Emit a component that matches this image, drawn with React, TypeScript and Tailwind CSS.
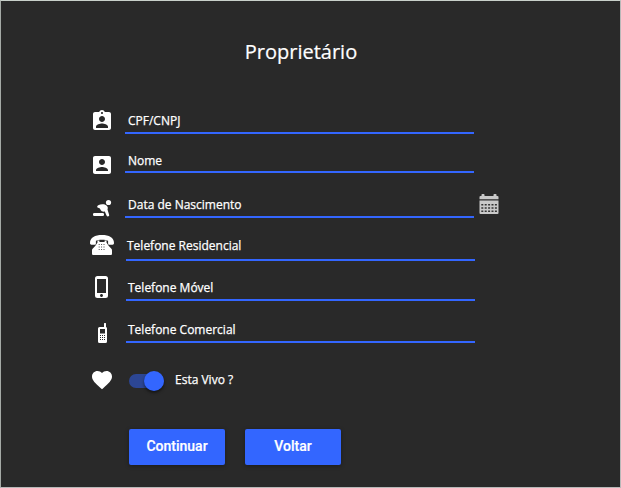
import type { ReactNode } from "react";

function Glyph({ d, className = "" }: { d: string; className?: string }) {
  return (
    <svg viewBox="0 0 24 24" className={`h-6 w-6 shrink-0 fill-white ${className}`}>
      <path d={d} />
    </svg>
  );
}

function Crawling() {
  return (
    <svg viewBox="0 0 24 24" className="mt-[23px] h-6 w-6 shrink-0 fill-white">
      <circle cx="18.5" cy="6.5" r="2.6" />
      <path d="M7.2 10.6C7.2 9.500 9.600 8.600 12.200 8.300C14.200 8.100 15.800 8.800 17 10C18.100 11.200 17.900 12.400 17.500 13.400L19.200 19C19.500 20.500 17.200 21 16.500 19.500L14.800 15.600C13 16 11.200 15.400 10.400 13.500C9.900 12.400 9.300 11.800 8 11.700C7.400 11.600 7.200 11.300 7.200 10.600Z" />
      <rect x="3" y="17" width="11" height="3" rx="1.300" />
    </svg>
  );
}

function DeskPhone() {
  return (
    <svg viewBox="0 0 24 20" className="mt-[17px] h-5 w-6 shrink-0">
      <path
        fill="#fff"
        d="M0 8C0 2.500 5 0 12 0S24 2.500 24 8C24 9.300 23.400 9.700 22.600 9.700H19.300C18.500 9.700 18.100 9.200 18.100 8.400V5.800C16 4.300 8 4.300 5.900 5.800V8.400C5.900 9.200 5.500 9.700 4.700 9.700H1.400C.6 9.700 0 9.300 0 8Z"
      />
      <path
        fill="#fff"
        d="M7.500 5.500H9.400V7H14.600V5.500H16.500V7.500L18.600 10.700L21.400 13.800C22 14.500 22 15.200 22 16.200V18.500C22 19.500 21.500 20 20.500 20H3.500C2.500 20 2 19.500 2 18.500V16.200C2 15.200 2 14.500 2.600 13.800L5.400 10.700L7.500 7.500Z"
      />
      <path stroke="#4a4a4a" strokeWidth="1" strokeDasharray="1 1.400" d="M8.700 9.500H15.500M8.700 12H15.500M8.700 14.500H15.500" />
    </svg>
  );
}

function CellPhone() {
  return (
    <svg viewBox="0 0 24 22" className="mt-[21px] h-[22px] w-6 shrink-0">
      <path fill="#fff" d="M14 1.500Q14 1 14.500 1H15.500Q16 1 16 1.500V5Q17 5.200 17 6.500V19.500Q17 21 15.500 21H9.500Q8 21 8 19.500V6.500Q8 5 9.500 5H14Z" />
      <rect x="10" y="7" width="5" height="4.500" fill="#292929" />
      <path stroke="#292929" strokeWidth="1" strokeDasharray="1 1" d="M10 13.500H15M10 15.500H15M10 17.500H15" />
    </svg>
  );
}

function Calendar() {
  return (
    <svg viewBox="0 0 20 20" className="mb-1 ml-[5px] h-5 w-5 shrink-0">
      <path fill="#c9c9c9" d="M1.500 2H2.500V.8Q2.500 0 3.300 0H4.700Q5.500 0 5.500 .8V2H14.500V.8Q14.500 0 15.300 0H16.700Q17.500 0 17.500 .8V2H18.500Q19.500 2 19.500 3V5.200H.5V3Q.5 2 1.500 2Z" />
      <path fill="#c9c9c9" d="M.5 6.600H19.500V19Q19.500 20 18.500 20H1.500Q.5 20 .5 19Z" />
      <path stroke="#333" strokeWidth="1.600" strokeDasharray="2 1.400" d="M2.300 10.700H17.900M2.300 14H17.900M2.300 17.300H17.900" />
    </svg>
  );
}

function Row({ icon, label, row, field, after }: { icon: ReactNode; label: string; row: string; field: string; after?: ReactNode }) {
  return (
    <div className={`flex items-start ${row}`}>
      {icon}
      <div className={`flex h-full w-[349px] shrink-0 items-end border-b-2 border-[#3366ff] text-[12px] leading-4 text-white [-webkit-text-stroke:0.25px_#fff] ${field}`}>
        {label}
      </div>
      {after && <div className="flex h-full items-end">{after}</div>}
    </div>
  );
}

export default function App() {
  return (
    <main className="h-[488px] w-[621px] border border-[#b8b8b8] border-t-[#c8d0ca] border-l-[#a5aaa6] bg-[#292929] font-['Open_Sans',sans-serif] text-white">
      <h1 className="h-[103px] pt-[37px] pr-[19px] text-center text-[20px] leading-7 [-webkit-text-stroke:0.2px_#fff]">Proprietário</h1>
      <form className="pl-[89px]">
        <Row
          icon={<Glyph className="mt-[5px]" d="M19 3h-4.180C14.400 1.840 13.300 1 12 1s-2.400.84-2.820 2H5c-1.100 0-2 .9-2 2v14c0 1.100.9 2 2 2h14c1.100 0 2-.9 2-2V5c0-1.100-.9-2-2-2zm-7 0c.55 0 1 .45 1 1s-.45 1-1 1-1-.45-1-1 .45-1 1-1zm0 4c1.660 0 3 1.340 3 3s-1.340 3-3 3-3-1.340-3-3 1.340-3 3-3zm6 12H6v-1.400c0-2 4-3.100 6-3.100s6 1.100 6 3.100V19z" />}
          label="CPF/CNPJ" row="h-[30px]" field="ml-[11px] pl-[3px] pb-[3px]"
        />
        <Row
          icon={<Glyph className="mt-[19px]" d="M3 5v14c0 1.100.89 2 2 2h14c1.100 0 2-.9 2-2V5c0-1.100-.9-2-2-2H5c-1.110 0-2 .9-2 2zm12 4c0 1.660-1.340 3-3 3s-3-1.340-3-3 1.340-3 3-3 3 1.340 3 3zm-9 8c0-2 4-3.100 6-3.100s6 1.100 6 3.100v1H6v-1z" />}
          label="Nome" row="h-[39px]" field="ml-[11px] pl-[3px] pb-[2px]"
        />
        <Row icon={<Crawling />} label="Data de Nascimento" row="h-[45px]" field="ml-[11px] pl-[3px] pb-[3px]" after={<Calendar />} />
        <Row icon={<DeskPhone />} label="Telefone Residencial" row="h-[43px]" field="ml-[12px] pl-px pb-[5px]" />
        <Row
          icon={<Glyph className="mt-[14px]" d="M15.500 1h-8A2.500 2.500 0 0 0 5 3.500v17A2.500 2.500 0 0 0 7.500 23h8a2.500 2.500 0 0 0 2.500-2.500v-17A2.500 2.500 0 0 0 15.500 1zm-4 21c-.83 0-1.500-.67-1.500-1.500s.67-1.500 1.500-1.500 1.500.67 1.500 1.500-.67 1.500-1.500 1.500zm4.500-4H7V4h9v14z" />}
          label="Telefone Móvel" row="h-10" field="ml-[12px] pl-[2px] pb-[3px]"
        />
        <Row icon={<CellPhone />} label="Telefone Comercial" row="h-[42px]" field="ml-[12px] pl-[2px] pb-[3px]" />
        <div className="mt-[25px] flex h-6 items-center">
          <Glyph d="M12 21.350l-1.450-1.320C5.400 15.360 2 12.280 2 8.500 2 5.420 4.420 3 7.500 3c1.740 0 3.410.81 4.500 2.090C13.090 3.810 14.760 3 16.500 3 19.580 3 22 5.420 22 8.500c0 3.780-3.400 6.860-8.550 11.540L12 21.350z" />
          <button type="button" role="switch" aria-checked="true" aria-label="Esta Vivo ?" className="mt-[2px] ml-[15px] flex h-[14px] w-[35px] items-center justify-end rounded-full bg-[#2c4694]">
            <span className="h-5 w-5 shrink-0 rounded-full bg-[#3366ff] shadow-[0_2px_3px_rgba(0,0,0,0.5)]" />
          </button>
          <span className="ml-[11px] text-[12px] leading-4 [-webkit-text-stroke:0.25px_#fff]">Esta Vivo ?</span>
        </div>
        <div className="mt-[37px] ml-[39px] flex gap-5 font-[Roboto,sans-serif] text-[14px] font-medium [-webkit-text-stroke:0.2px_#fff]">
          <button type="button" className="h-9 w-24 rounded-[2px] bg-[#3366ff] pb-[2px] shadow-[0_1px_4px_rgba(0,0,0,0.35)]">Continuar</button>
          <button type="button" className="h-9 w-24 rounded-[2px] bg-[#3366ff] pb-[2px] shadow-[0_1px_4px_rgba(0,0,0,0.35)]">Voltar</button>
        </div>
      </form>
    </main>
  );
}
